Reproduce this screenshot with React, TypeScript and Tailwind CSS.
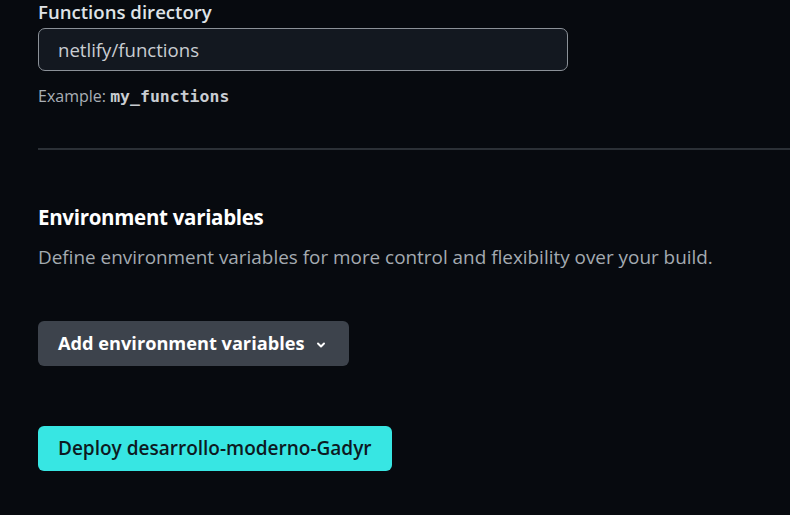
const ChevronDown = () => (
    <svg width="12" height="12" viewBox="0 0 16 16" fill="none" className="mt-[2px]">
        <path d="M4 6l4 4 4-4" stroke="currentColor" strokeWidth="2.6" strokeLinecap="round" strokeLinejoin="round" />
    </svg>
)

export default function App() {
    return (
        <div className="w-[790px] h-[515px] overflow-hidden bg-[#070a0f] font-['Open_Sans',sans-serif]">
            <div className="pl-[38px] pt-[2px]">
                <label className="block text-[18.6px] leading-[20px] font-semibold text-[#dfe3e7]">Functions directory</label>
                <div className="mt-[6px] w-[530px] h-[43px] rounded-[7px] border border-[#8b9198] bg-[#131820] flex items-center px-[19px]">
                    <span className="text-[18.6px] text-[#c9cdd2]">netlify/functions</span>
                </div>
                <p className="mt-[14px] text-[16px] leading-[22px] text-[#a9afb6]">
                    Example: <code className="font-['DejaVu_Sans_Mono',monospace] text-[16.5px] font-semibold text-[#c9cdd2]">my_functions</code>
                </p>
            </div>

            <div className="ml-[38px] mt-[40px] h-[2px] bg-[#2b3036]" />

            <div className="pl-[38px] pt-[53px]">
                <h2 className="text-[20.5px] leading-[28px] font-bold text-white tracking-[-0.3px]">Environment variables</h2>
                <p className="mt-[13px] text-[18.9px] leading-[26px] text-[#a4aab1]">
                    Define environment variables for more control and flexibility over your build.
                </p>

                <button type="button" className="mt-[51px] h-[45px] pl-[20px] pr-[22px] rounded-[6px] bg-[#3d434c] text-white text-[18.2px] font-bold flex items-center gap-[10px]">
                    Add environment variables
                    <ChevronDown />
                </button>

                <button type="button" className="mt-[60px] h-[45px] px-[20px] rounded-[6px] bg-[#37e6e3] text-[#0d1a22] text-[19px] font-semibold flex items-center">
                    Deploy desarrollo-moderno-Gadyr
                </button>
            </div>
        </div>
    )
}
